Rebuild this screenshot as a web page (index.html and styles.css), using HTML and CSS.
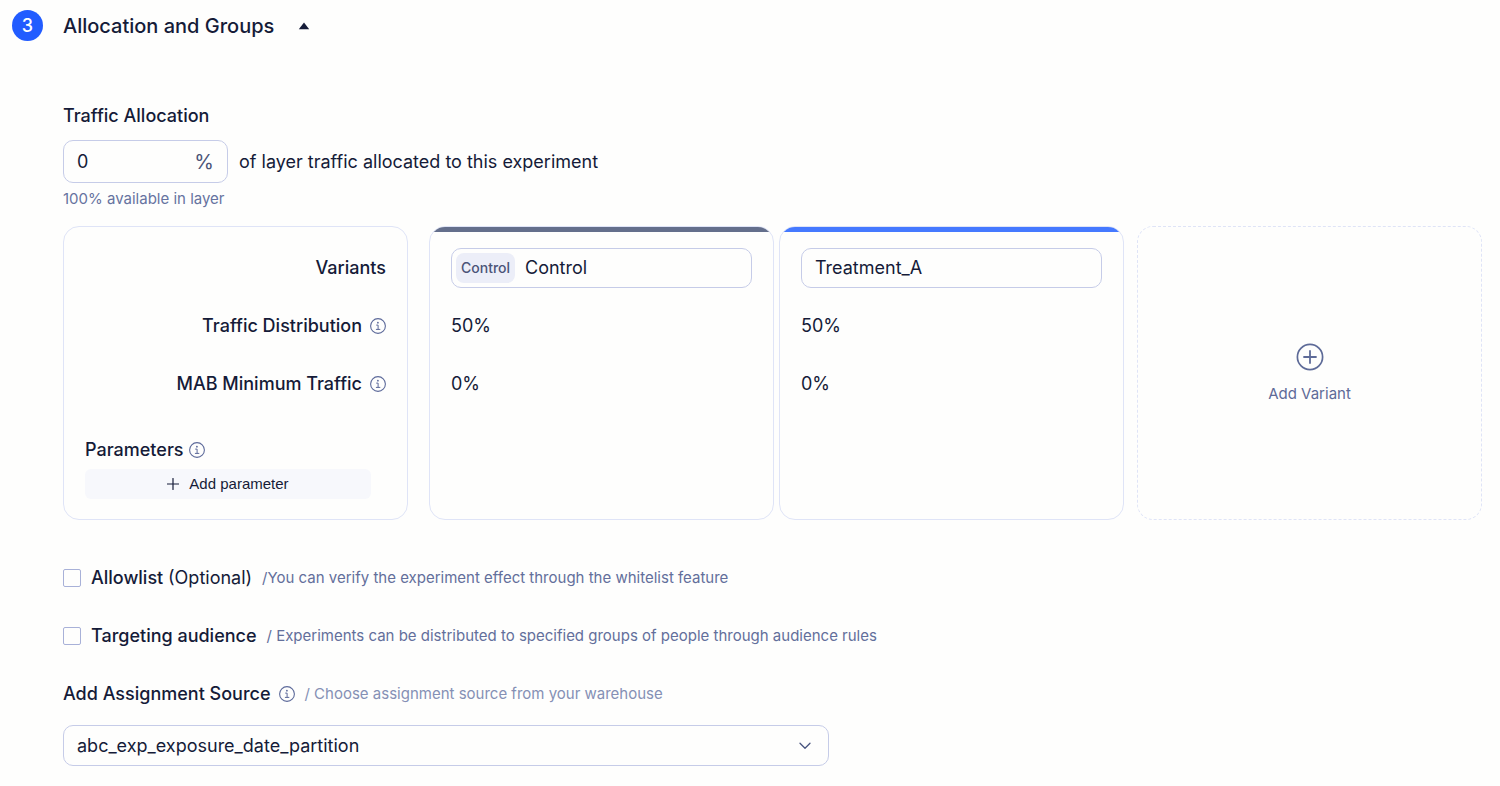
FILE: index.html
```html
<!DOCTYPE html>
<html lang="en">
<head>
<meta charset="utf-8">
<title>Allocation and Groups</title>
<link rel="stylesheet" href="styles.css">
</head>
<body>
<svg class="sprite" width="0" height="0" aria-hidden="true">
  <symbol id="info" viewBox="0 0 16 16">
    <g fill="none" stroke="currentColor" stroke-linecap="round" stroke-linejoin="round">
      <circle cx="8" cy="8" r="7.4" stroke-width="1.1"/>
      <path d="M6.6 7.1h1.5v4.2M6.3 11.4h3.6" stroke-width="1"/>
    </g>
    <circle cx="7.9" cy="4.7" r="0.9" fill="currentColor"/>
  </symbol>
</svg>
<main class="step">
  <header class="step-header">
    <span class="step-number">3</span>
    <h1 class="step-title">Allocation and Groups</h1>
    <button class="collapse" type="button" aria-label="Collapse section">
      <svg width="12" height="8" viewBox="0 0 12 8"><path d="M6 0.5 11.2 7.3H0.8z" fill="currentColor"/></svg>
    </button>
  </header>

  <div class="step-body">
    <section class="allocation">
      <label class="label" for="traffic">Traffic Allocation</label>
      <div class="allocation-row">
        <div class="field field-percent">
          <input id="traffic" class="field-input" type="text" value="0">
          <span class="unit">%</span>
        </div>
        <span>of layer traffic allocated to this experiment</span>
      </div>
      <p class="hint">100% available in layer</p>
    </section>

    <section class="variants">
      <div class="card card-labels">
        <div class="row row-end label">Variants</div>
        <div class="row row-end label">Traffic Distribution <svg class="info"><use href="#info"/></svg></div>
        <div class="row row-end label">MAB Minimum Traffic <svg class="info"><use href="#info"/></svg></div>
        <div class="parameters label">Parameters <svg class="info"><use href="#info"/></svg></div>
        <button class="add-parameter" type="button">
          <svg width="12" height="12" viewBox="0 0 12 12"><path d="M6 0.5v11M0.5 6h11" stroke="currentColor" stroke-width="1.2" stroke-linecap="round"/></svg>
          Add parameter
        </button>
      </div>

      <div class="card card-control">
        <div class="row">
          <div class="field field-tagged">
            <label class="tag" for="variant-control">Control</label>
            <input id="variant-control" class="field-input" type="text" value="Control">
          </div>
        </div>
        <div class="row">50%</div>
        <div class="row">0%</div>
      </div>

      <div class="card card-treatment">
        <div class="row">
          <div class="field">
            <input class="field-input" type="text" value="Treatment_A" aria-label="Variant name">
          </div>
        </div>
        <div class="row">50%</div>
        <div class="row">0%</div>
      </div>

      <button class="card card-add" type="button">
        <svg width="28" height="28" viewBox="0 0 28 28" fill="none" stroke="currentColor" stroke-linecap="round"><circle cx="14" cy="14" r="12.6" stroke-width="1.7"/><path d="M14 8v12M8 14h12" stroke-width="1.8"/></svg>
        Add Variant
      </button>
    </section>

    <section class="options">
      <div class="option">
        <input id="allowlist" class="checkbox" type="checkbox">
        <label class="label" for="allowlist">Allowlist <span class="optional">(Optional)</span></label>
        <span class="note">/You can verify the experiment effect through the whitelist feature</span>
      </div>
      <div class="option">
        <input id="audience" class="checkbox" type="checkbox">
        <label class="label" for="audience">Targeting audience</label>
        <span class="note">/ Experiments can be distributed to specified groups of people through audience rules</span>
      </div>
      <div class="option option-source">
        <label class="label" for="source">Add Assignment Source</label>
        <svg class="info"><use href="#info"/></svg>
        <span class="note note-light">/ Choose assignment source from your warehouse</span>
      </div>
    </section>

    <div class="select-wrap">
      <select id="source" class="select"><option>abc_exp_exposure_date_partition</option></select>
      <svg class="chevron" width="12" height="8" viewBox="0 0 12 8"><path d="M1 1.2 6 6.2 11 1.2" fill="none" stroke="currentColor" stroke-width="1.3" stroke-linecap="round" stroke-linejoin="round"/></svg>
    </div>
  </div>
</main>
</body>
</html>
```
FILE: styles.css
```css
* { box-sizing: border-box; }

body {
  margin: 0;
  background: #fefefd;
  color: #151b38;
  font: 400 18px/26px Inter, "Liberation Sans", sans-serif;
}

input, select, button { font: inherit; color: inherit; }

svg { display: block; flex: none; }
.sprite { position: absolute; }

.step { padding: 10px 18px 20px 12px; }

.step-header {
  display: flex;
  align-items: center;
}

.step-number {
  display: grid;
  place-items: center;
  width: 31px;
  height: 31px;
  margin-right: 20px;
  border-radius: 50%;
  background: #225cff;
  color: #fff;
  font-weight: 500;
}

.step-title {
  margin: 0 24px 0 0;
  font-size: 20px;
  font-weight: 500;
  line-height: 30px;
}

.collapse {
  padding: 0;
  border: 0;
  background: none;
}

.step-body { padding: 62px 0 0 51px; }

.label { font-weight: 500; }

.allocation > .label { display: block; }

.allocation-row {
  display: flex;
  align-items: center;
  gap: 11px;
  margin-top: 11px;
}

.field {
  display: flex;
  align-items: center;
  width: 100%;
  height: 40px;
  padding: 0 13px;
  border: 1px solid #c6cce8;
  border-radius: 10px;
}

.field-percent { width: 165px; height: 43px; }
.field-tagged { gap: 10px; padding-left: 4px; }

.field-input {
  flex: 1;
  min-width: 0;
  padding: 0;
  border: 0;
  outline: 0;
  background: none;
}

.unit { font-size: 20px; color: #4b5478; }

.tag {
  padding: 0 5px;
  border-radius: 8px;
  background: #eceef8;
  color: #4b5478;
  font-size: 14px;
  font-weight: 500;
  line-height: 30px;
}

.hint {
  margin: 5px 0 0;
  color: #6673a0;
  font-size: 15px;
  line-height: 22px;
}

.variants { display: flex; margin-top: 16px; }

.card {
  position: relative;
  flex: 1 1 0;
  min-width: 0;
  padding: 12px 21px 20px;
  border: 1px solid #dfe4f7;
  border-radius: 16px;
  overflow: hidden;
}

.card-labels { margin-right: 21px; }
.card-control { margin-right: 5px; }
.card-treatment { margin-right: 13px; }

.card-control::before,
.card-treatment::before {
  content: "";
  position: absolute;
  inset: 0 0 auto;
  height: 5px;
  background: #646f8c;
}

.card-treatment::before { background: #4579ff; }

.row { display: flex; align-items: center; height: 58px; }
.row-end { justify-content: flex-end; gap: 8px; }

.info { width: 16px; height: 16px; color: #5d6a9a; }

.parameters {
  display: flex;
  align-items: center;
  gap: 5px;
  margin: 24px 0 6px;
}

.add-parameter {
  display: flex;
  align-items: center;
  justify-content: center;
  gap: 10px;
  width: 95%;
  height: 30px;
  padding: 0;
  border: 0;
  border-radius: 6px;
  background: #f7f8fc;
  font: 15px/30px "Liberation Sans", Arial, sans-serif;
}

.card-add {
  display: flex;
  flex-direction: column;
  align-items: center;
  justify-content: center;
  gap: 10px;
  padding-top: 24px;
  border-style: dashed;
  background: none;
  color: #5e6b98;
  font-size: 15px;
}

.options {
  display: grid;
  gap: 32px;
  margin-top: 45px;
}

.option { display: flex; align-items: center; gap: 10px; }
.option-source { gap: 8px; }
.optional { font-weight: 400; }

.checkbox {
  appearance: none;
  flex: none;
  width: 18px;
  height: 18px;
  margin: 0;
  border: 1px solid #a8b1d8;
  border-radius: 2px;
}

.note { color: #636f9b; font-size: 15px; }
.note-light { margin-left: 2px; color: #8590b5; }

.select-wrap {
  position: relative;
  width: 54%;
  margin-top: 18px;
}

.select {
  appearance: none;
  display: block;
  width: 100%;
  height: 41px;
  padding: 0 40px 0 13px;
  border: 1px solid #c6cce8;
  border-radius: 10px;
  background: none;
}

.chevron {
  position: absolute;
  top: 17px;
  right: 18px;
  color: #48547f;
  pointer-events: none;
}
```
